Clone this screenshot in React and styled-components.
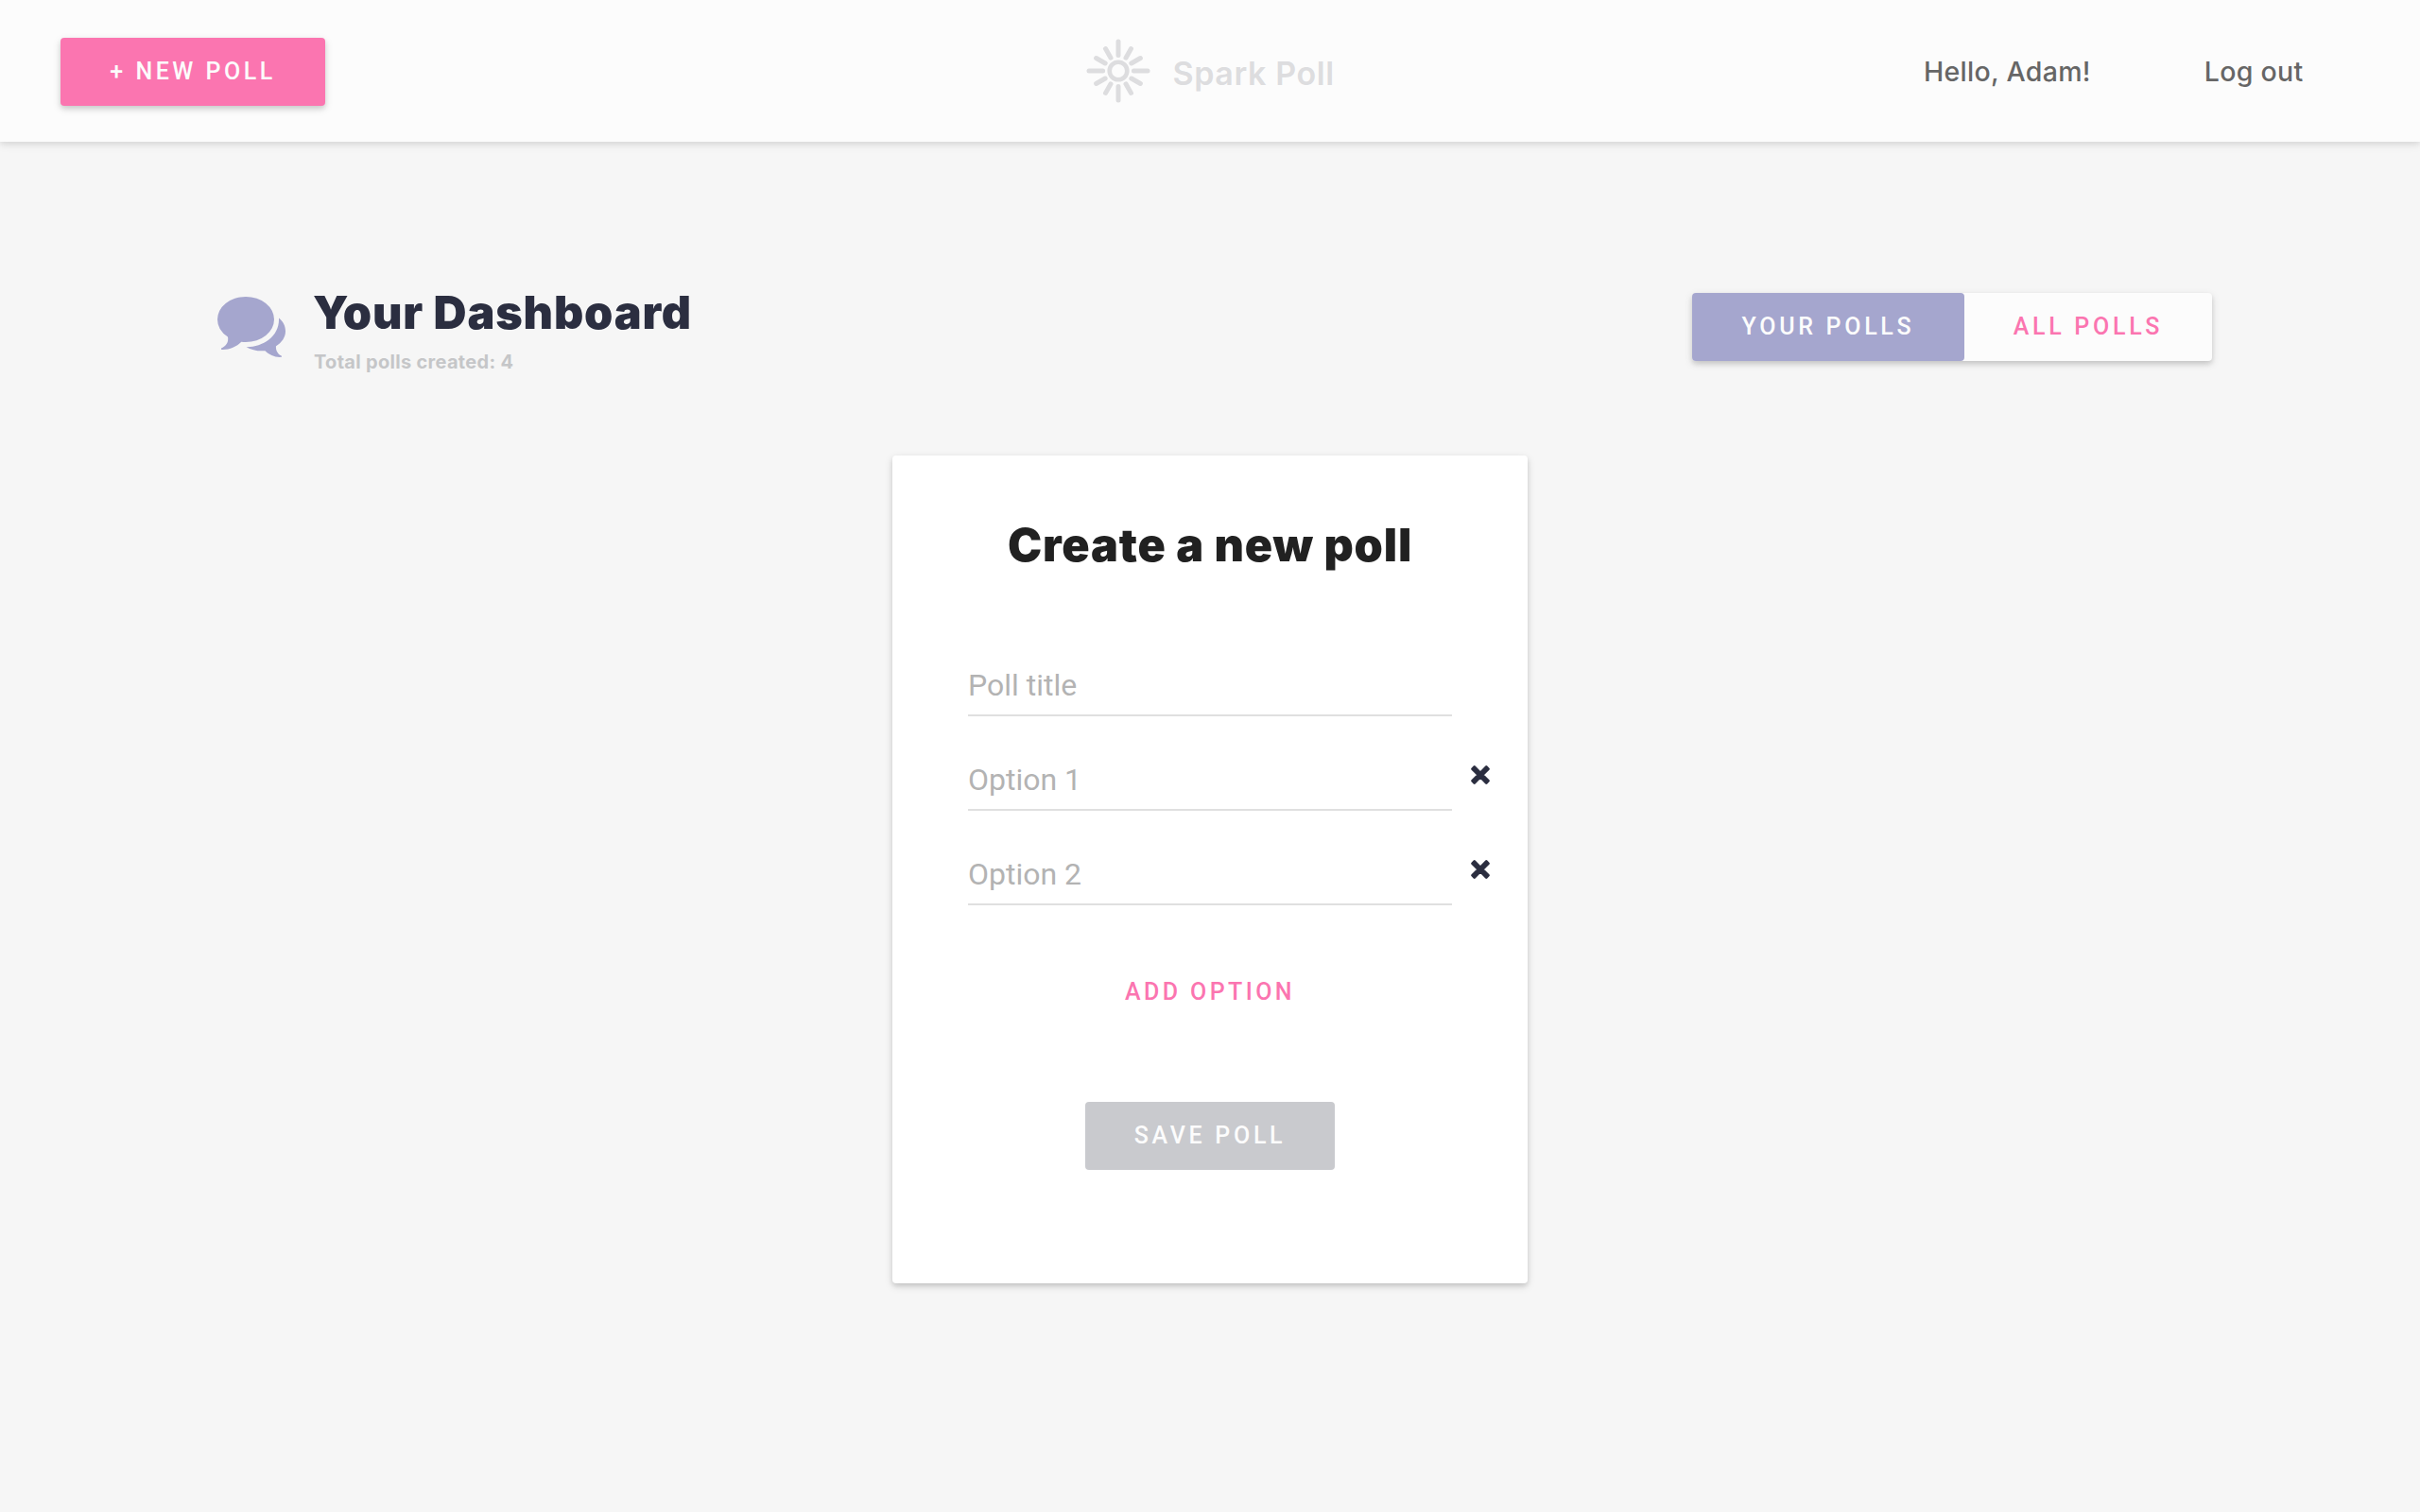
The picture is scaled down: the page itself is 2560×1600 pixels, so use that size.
import React from "react";
import styled, { createGlobalStyle } from "styled-components";

const display = `Inter, "Liberation Sans", sans-serif`;
const body = `Roboto, "Liberation Sans", sans-serif`;

const color = {
  pink: "#fb75b0",
  lavender: "#a5a6ce",
  ink: "#2b2e40",
  paper: "#fcfcfc",
  logo: "#dddddf",
};

const raised = "0 3px 5px rgba(0, 0, 0, 0.11), 0 3px 10px rgba(0, 0, 0, 0.12)";

const GlobalStyle = createGlobalStyle`
  *, *::before, *::after { box-sizing: border-box; }
  body { margin: 0; background: #f6f6f6; font-family: ${body}; }
`;

const Page = styled.div`
  min-height: 1600px;
`;

const Header = styled.header`
  display: grid;
  grid-template-columns: 1fr auto 1fr;
  align-items: center;
  height: 150px;
  padding: 0 64px;
  background: ${color.paper};
  box-shadow: 0 3px 5px rgba(0, 0, 0, 0.06), 0 3px 10px rgba(0, 0, 0, 0.08);
`;

const Button = styled.button`
  display: flex;
  align-items: center;
  justify-content: center;
  width: ${(p) => p.$width}px;
  height: 72px;
  padding: 0;
  border: 0;
  border-radius: 4px;
  background: ${(p) => p.$bg || "transparent"};
  color: ${(p) => p.$fg || color.paper};
  box-shadow: ${(p) => (p.$raised ? raised : "none")};
  font-family: ${body};
  font-size: 25px;
  font-weight: 500;
  line-height: 72px;
  letter-spacing: ${(p) => p.$track || 3.7}px;
  white-space: pre;
`;

const HeaderAction = styled.div`
  padding-top: 2px;
`;

const Brand = styled.div`
  display: flex;
  align-items: center;
  gap: 24px;
  color: ${color.logo};
`;

const BrandName = styled.span`
  width: 171px;
  padding-top: 6px;
  font-family: ${display};
  font-size: 34px;
  font-weight: 600;
  line-height: 44px;
  letter-spacing: 0.6px;
  white-space: nowrap;
`;

const Nav = styled.nav`
  display: flex;
  justify-content: flex-end;
  gap: 120px;
  padding: 2px 59.5px 0 0;
`;

const NavLink = styled.a`
  color: #666;
  font-family: ${display};
  font-size: 28.5px;
  font-weight: 500;
  line-height: 40px;
  letter-spacing: 0.3px;
  white-space: nowrap;
`;

const Main = styled.main`
  padding: 0 220px 0 230px;
`;

const DashboardBar = styled.section`
  display: flex;
  align-items: flex-start;
  justify-content: space-between;
  height: 332px;
  padding-top: 150px;
`;

const Intro = styled.div`
  display: flex;
  gap: 29px;
`;

const IntroIcon = styled.svg`
  width: 72px;
  height: 64px;
  margin-top: 14px;
  fill: ${color.lavender};
`;

const Title = styled.h1`
  margin: 0;
  color: ${(p) => p.$color};
  font-family: ${display};
  font-size: 48.5px;
  font-weight: 900;
  line-height: 61px;
  letter-spacing: 0.83px;
  white-space: nowrap;
`;

const Subtitle = styled.p`
  margin: 8px 0 0 1px;
  color: #c5c6c8;
  font-family: ${display};
  font-size: 20px;
  font-weight: 700;
  line-height: 28px;
  letter-spacing: 0.3px;
`;

const Tabs = styled.div`
  display: flex;
  margin-top: 10px;
  border-radius: 4px;
  background: ${color.paper};
  box-shadow: ${raised};
`;

const Card = styled.form`
  display: flex;
  flex-direction: column;
  align-items: center;
  width: 672px;
  height: 876px;
  margin-left: 714px;
  padding: 64px 80px 120px;
  border-radius: 4px;
  background: #fff;
  box-shadow: ${raised};
`;

const Fields = styled.div`
  display: flex;
  flex-direction: column;
  gap: 40px;
  width: 512px;
  margin: 91px 0 56px;
`;

const FieldRow = styled.div`
  display: flex;
  align-items: center;
  gap: 20px;
`;

const Field = styled.label`
  flex: 0 0 512px;
  height: 60px;
  border-bottom: 2px solid #e0e0e0;
  color: #b3b3b3;
  font-size: 32px;
  line-height: 54px;
`;

const RemoveIcon = styled.svg`
  flex: none;
  width: 20px;
  height: 20px;
  margin-bottom: 16px;
  fill: ${color.ink};
  stroke: ${color.ink};
  stroke-width: 2.8;
  stroke-linejoin: round;
`;

const SaveSlot = styled.div`
  margin-top: 80px;
`;

function SparkLogo() {
  const rays = Array.from({ length: 12 }, (_, i) => i * 30);
  return (
    <svg width="68" height="68" viewBox="-34 -34 68 68" fill="none" stroke="currentColor">
      <circle r="9.3" strokeWidth="4.6" />
      {rays.map((a) => (
        <line
          key={a}
          y1={a % 90 ? -16 : -16.4}
          y2={a % 90 ? -27 : -31}
          strokeWidth="5"
          strokeLinecap="round"
          transform={`rotate(${a})`}
        />
      ))}
    </svg>
  );
}

function Remove() {
  return (
    <RemoveIcon viewBox="0 0 20 20">
      <path d="M3.7 1.6 10 7.9l6.3-6.3 2.1 2.1L12.1 10l6.3 6.3-2.1 2.1L10 12.1l-6.3 6.3-2.1-2.1L7.9 10 1.6 3.7z" />
    </RemoveIcon>
  );
}

const fields = [
  { label: "Poll title" },
  { label: "Option 1", removable: true },
  { label: "Option 2", removable: true },
];

export default function App() {
  return (
    <Page>
      <GlobalStyle />
      <Header>
        <HeaderAction>
          <Button $width={280} $bg={color.pink} $track={3.5} $raised>+ NEW POLL</Button>
        </HeaderAction>
        <Brand>
          <SparkLogo />
          <BrandName>Spark Poll</BrandName>
        </Brand>
        <Nav>
          <NavLink>Hello, Adam!</NavLink>
          <NavLink>Log out</NavLink>
        </Nav>
      </Header>
      <Main>
        <DashboardBar>
          <Intro>
            <IntroIcon viewBox="0 0 72 64">
              <path d="M30 0A30 24 0 0 1 60 24A30 24 0 0 1 30 48Q27.5 48 25.3 47.8C20 53.2 12 56.5 4.2 56L4 54.6C9.2 52.2 12 48.2 11 42.6A30 24 0 0 1 0 24A30 24 0 0 1 30 0z" />
              <path d="M65 22.5C69.5 26 72 31 72 36.5 72 43 68 48.5 62 52.3 61.5 57 64 61 68 62.7V63.8C61 64.5 55 61.5 50.5 57.2 43 57.8 36 56.5 30.5 53.2 48 53.5 66 42 65 22.5z" />
            </IntroIcon>
            <div>
              <Title $color={color.ink}>Your Dashboard</Title>
              <Subtitle>Total polls created: 4</Subtitle>
            </div>
          </Intro>
          <Tabs>
            <Button type="button" $width={288} $bg={color.lavender}>YOUR POLLS</Button>
            <Button type="button" $width={262} $fg={color.pink}>ALL POLLS</Button>
          </Tabs>
        </DashboardBar>
        <Card>
          <Title as="h2" $color="#212121">Create a new poll</Title>
          <Fields>
            {fields.map((f) => (
              <FieldRow key={f.label}>
                <Field>{f.label}</Field>
                {f.removable && <Remove />}
              </FieldRow>
            ))}
          </Fields>
          <Button type="button" $width={280} $fg={color.pink} $track={3.4}>ADD OPTION</Button>
          <SaveSlot>
            <Button type="button" $width={264} $bg="#c9cace">SAVE POLL</Button>
          </SaveSlot>
        </Card>
      </Main>
    </Page>
  );
}
